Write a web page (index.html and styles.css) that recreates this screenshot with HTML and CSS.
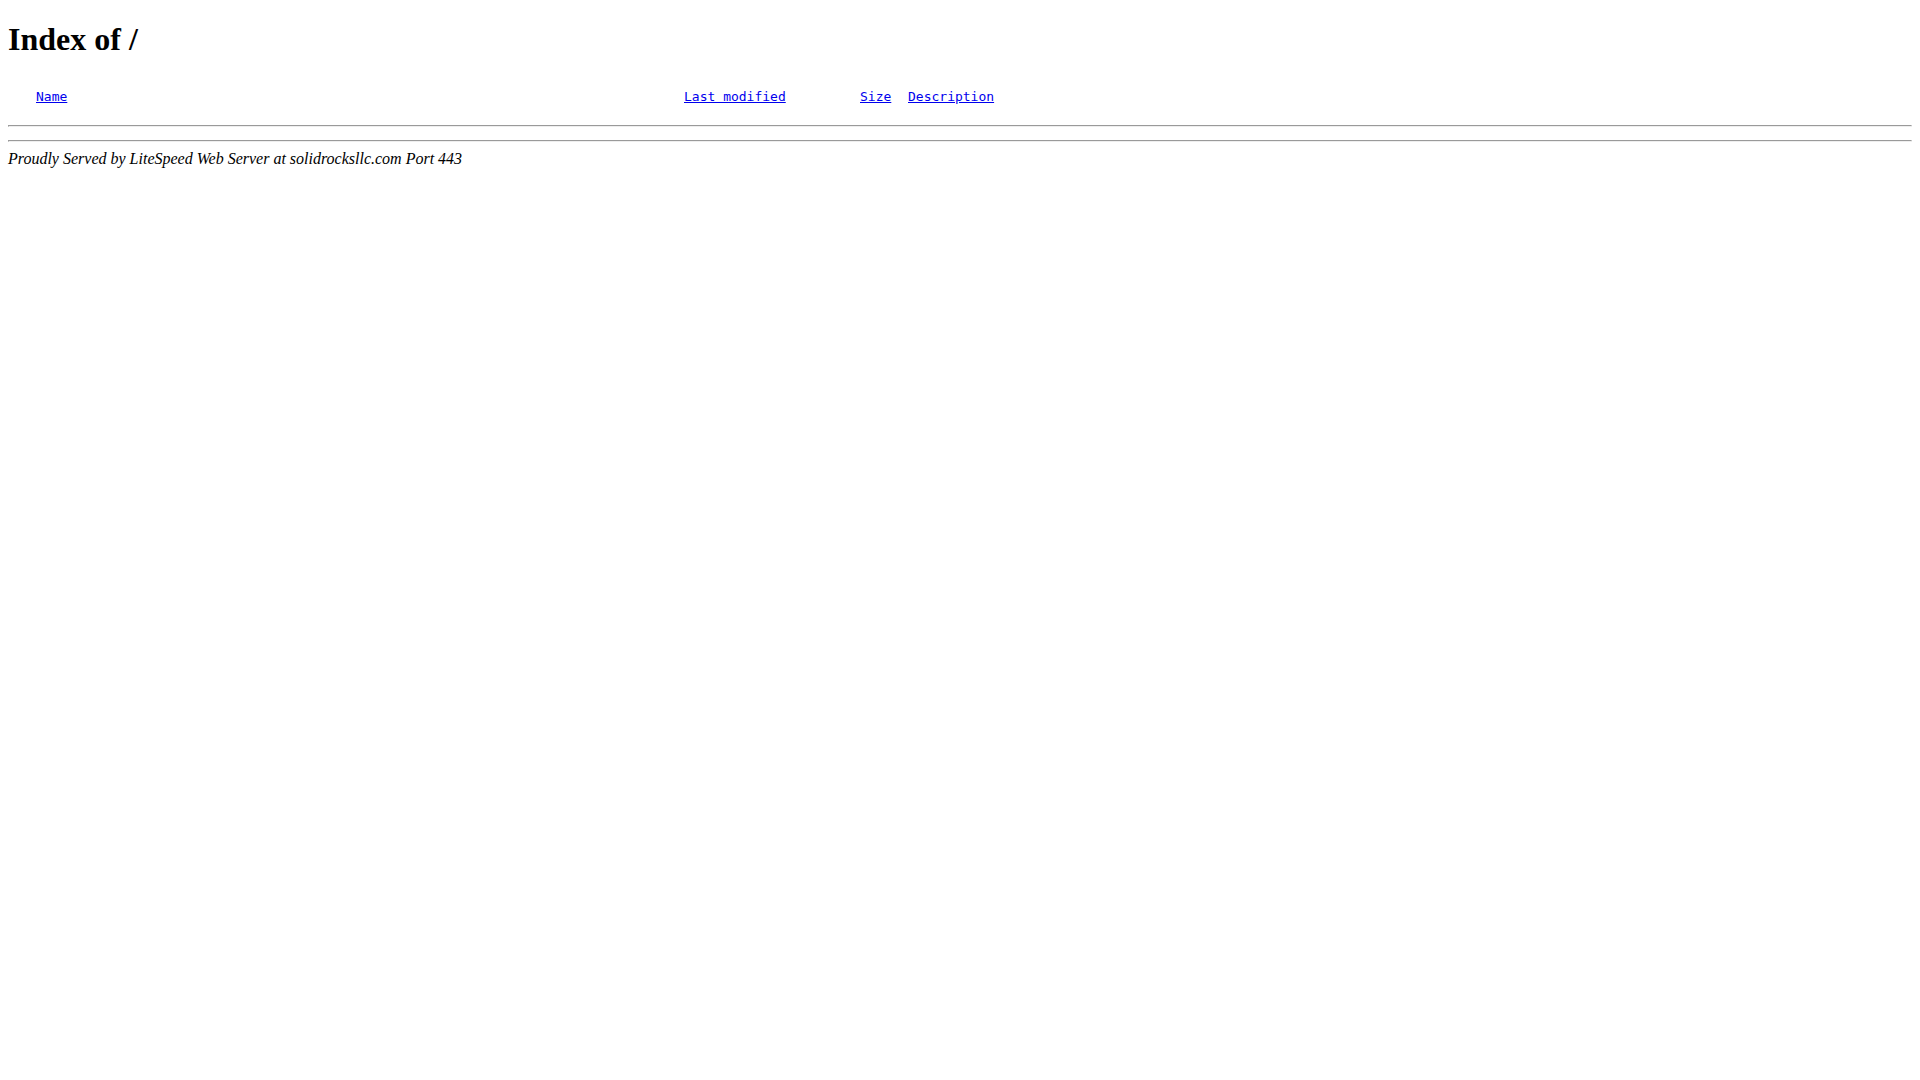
FILE: index.html
```html
<!DOCTYPE html>
<html lang="en">
<head>
<meta charset="utf-8">
<title>Index of /</title>
<link rel="stylesheet" href="styles.css">
</head>
<body>
<h1 class="title">Index of /</h1>
<div class="listing">
<a href="?ND">Name</a>
<a href="?MA">Last modified</a>
<a href="?SA">Size</a>
<a href="?DA">Description</a>
</div>
<hr class="rule">
<hr class="rule">
<address class="server">Proudly Served by LiteSpeed Web Server at solidrocksllc.com Port 443</address>
</body>
</html>
```

FILE: styles.css
```css
body {
  margin: 0;
  padding: 21px 8px;
  background: #fff;
  color: #000;
  font-family: "Liberation Serif", "Times New Roman", serif;
  font-size: 16px;
}

.title {
  margin: 0;
  font-size: 32px;
  line-height: 37px;
}

.listing {
  display: grid;
  grid-template-columns: 648px 176px 48px max-content;
  justify-items: start;
  padding-left: 28px;
  margin: 31px 0 21px;
  font-family: "DejaVu Sans Mono", monospace;
  font-size: 13px;
  line-height: 15px;
}

.listing a {
  color: #0000ee;
  text-decoration: underline;
}

.rule {
  margin: 13px 0 8px;
  border: 1px solid;
  border-color: #9a9a9a #eee #eee #9a9a9a;
}

.server {
  font-style: italic;
}
```
